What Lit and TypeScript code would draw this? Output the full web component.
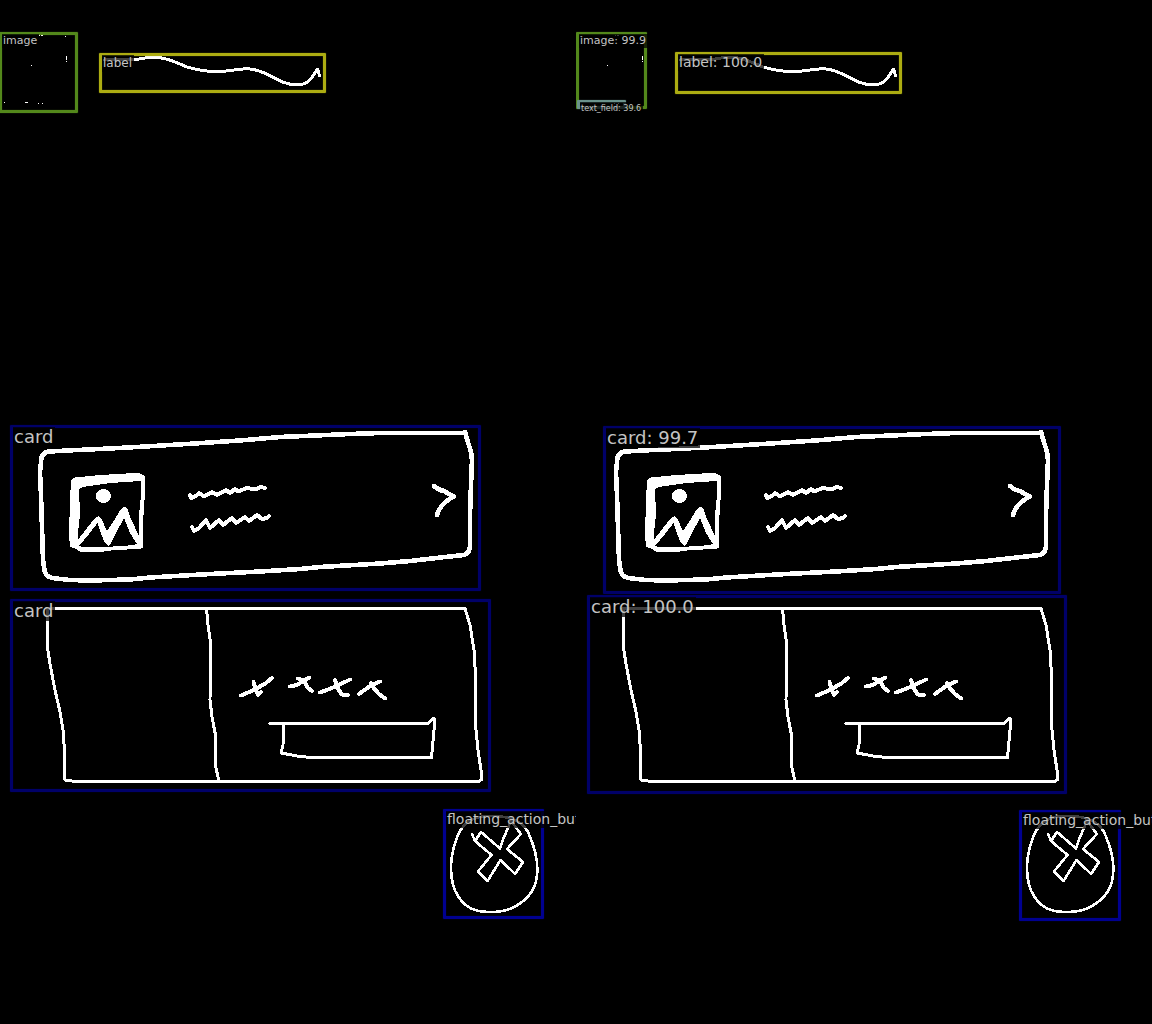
import { LitElement, css, html, svg } from "lit";
import { customElement, property } from "lit/decorators.js";
import { classMap } from "lit/directives/class-map.js";

const CANVAS_WIDTH = 576;
const CANVAS_HEIGHT = 1024;

type Kind = "image" | "label" | "card" | "fab" | "field";
type TextSize = "tiny" | "small" | "compact" | "medium" | "large";

interface Detection {
  kind: Kind;
  size: TextSize;
  text: string;
  left: number;
  top: number;
  right: number;
  bottom: number;
}

const groundTruth: Detection[] = [
  { kind: "image", size: "small", text: "image", left: -1, top: 32, right: 78, bottom: 113 },
  { kind: "label", size: "compact", text: "label", left: 99, top: 53, right: 326, bottom: 93 },
  { kind: "card", size: "large", text: "card", left: 10, top: 425, right: 481, bottom: 591 },
  { kind: "card", size: "large", text: "card", left: 10, top: 599, right: 491, bottom: 792 },
  { kind: "fab", size: "medium", text: "floating_action_button", left: 443, top: 809, right: 544, bottom: 919 },
];

const predictions: Detection[] = [
  { kind: "image", size: "small", text: "image: 99.9", left: 0, top: 32, right: 71, bottom: 109 },
  { kind: "field", size: "tiny", text: "text_field: 39.6", left: 1, top: 100, right: 50, bottom: 109 },
  { kind: "label", size: "medium", text: "label: 100.0", left: 99, top: 52, right: 326, bottom: 94 },
  { kind: "card", size: "large", text: "card: 99.7", left: 27, top: 426, right: 485, bottom: 594 },
  { kind: "card", size: "large", text: "card: 100.0", left: 11, top: 595, right: 491, bottom: 794 },
  { kind: "fab", size: "medium", text: "floating_action_button", left: 443, top: 810, right: 545, bottom: 921 },
];

const specks = svg`
  <path class="solid" d="M31 65h1v1h-1zM66 56h1v4h-1zM66 61h1v1h-1zM4 102h1v1h-1zM25 102h3v1h-3zM38 103h1v1h-1zM42 103h1v1h-1zM39 35h1v1h-1zM41 35h2v1h-2zM65 36h1v1h-1zM4 36h1v1h-1z"/>`;

const wave = svg`
  <path class="line" d="M104 60Q118 59 134 60Q145 57 157 57.500C169 58 177 63 187 67C197 70 206 72 220 71.500C232 71 240 68 250 69C264 70 276 80 284 82.500C292 85.500 302 86 308 81.500C314 77 315 71 317.500 69.500Q319 72 319.500 76"/>`;

const listCard = svg`
  <path class="line heavy" d="M41 462Q41 452 50 451.500L67 450.500 110 448.500 145 446.500 195 443.500 240 440.500 280 437 350 434 380 433H464L465 432 467 439 471 452 472 460 471 485 470 515V545Q470 553 464 555L445 557 410 561 380 563.500 320 567 300 569 260 571.500 210 574 150 577.500 130 579.500 90 580.500 70 580 52 578Q45 576 44.500 570L43 560 42 527 41 495 40 472Z"/>
  <path class="solid" d="M71 481Q72 478 75 477.500L100 475 135 473Q143 473 145 477L144.500 500 142.500 530 143 548 139 549 115 550 100 552 80 551.500 74 548 70 547 69 535 70 500Z"/>
  <path class="hole" d="M79 489Q80 487 90 486L110 483 141 481V495L139 515 138.500 544 125 546 100 547H82L78 545 78 532 80 515Z"/>
  <path class="solid" d="M77 541L87 528 96 517 99 516 102 520 107 531 115 519 121 509 124 507 127 508 131 519 139 536V546L135 541 130 533 124 518 116 533 111 543 108 546 105 543 101 534 97.500 523 89 534 79 546Z"/>
  <ellipse class="solid" cx="103.500" cy="496" rx="7.500" ry="7"/>
  <path class="line glyph" d="M190 495L191 498 196 496 199 493 204 496.500 212 492 217 495 226 490 230 493 235 489 238 491.500 247 488 255 489.500 261 487 265 488"/>
  <path class="line glyph" d="M192 527L194 531 199 528 206 520 210 528 219 520 223 525 232 518 236 523 245 517 249 521 257 515 262 519 267 518 269 516"/>
  <path class="line heavy" d="M434 486Q438 490 444 491L453.500 496.500Q440 504 437 515"/>`;

const mediaCard = svg`
  <path class="line" d="M47 608.500H465L470 625 474 650 475.500 675V725L478 750 481 770 482 779 479 781.500H75L65 780 64.500 750 63 730 60 712 55 690 50 664 47 644Z"/>
  <path class="line" d="M206.500 609L208 625 210.500 642 210 700 212 717 215.500 735 216 768 219 781"/>
  <path class="line glyph" d="M241 695.500L254 690 266 683 272 678M253.500 682L256 690 258 695 261 692"/>
  <path class="line glyph" d="M290 686.500L297 685 304 680.500 309 677.500M298 678.500L304 681 308 688 312 691"/>
  <path class="line glyph" d="M320 692.500L332 688 345 682 350 679.500M335 680L337 687 341 693.500 344 695.500 348 695"/>
  <path class="line glyph" d="M359 694L370 686 380 681.500M371 683L373 687 379 694 385 698.500"/>
  <path class="line" d="M270 723.500H428L434 718V730L431.500 757.500H312L300 756.500 281 753 283 745 283.500 724"/>`;

const roundButton = svg`
  <path class="line fine" d="M468 822C456 830 451 855 451 868C451 892 462 907 478 911C492 913 506 912 516 906C530 898 536 888 537 875C539 858 533 843 528 832C520 818 505 816 490 816Q476 816 468 822Z"/>
  <path class="line fine" d="M472 834L475 841 481 832 500 848.500 504 837 511 821 521 834 507 849 523 862 515 874 500.500 860 487.500 881 478 871.500 491.500 855 475 841"/>`;

@customElement("annotated-sketch")
export class AnnotatedSketch extends LitElement {
  @property({ attribute: false }) detections: Detection[] = [];
  @property() caption = "";

  static styles = css`
    :host {
      display: block;
      min-width: 0;
    }
    .canvas {
      position: relative;
      margin: 0;
      aspect-ratio: 576 / 1024;
      overflow: hidden;
      background: #000;
    }
    .sketch {
      display: block;
      width: 100%;
      height: 100%;
    }
    .line {
      fill: none;
      stroke: #fff;
      stroke-width: 3;
      stroke-linecap: round;
      stroke-linejoin: round;
    }
    .heavy {
      stroke-width: 4.6;
    }
    .glyph {
      stroke-width: 4;
    }
    .fine {
      stroke-width: 2.6;
    }
    .solid {
      fill: #fff;
    }
    .hole {
      fill: #000;
    }
    .box {
      position: absolute;
      box-sizing: border-box;
      border: 3px solid currentcolor;
      border-radius: 1px;
      box-shadow: 0 0 1px currentcolor, inset 0 0 1px currentcolor;
    }
    .image {
      color: #53881b;
    }
    .label {
      color: #acac12;
    }
    .card {
      color: #000068;
    }
    .fab {
      color: #000090;
    }
    .field {
      color: #6a938c;
    }
    .tag {
      position: absolute;
      top: -1px;
      left: 0;
      padding: 0 2px 1px 1px;
      background: rgb(0 0 0 / 75%);
      color: #c4c4c4;
      font-family: "DejaVu Sans", sans-serif;
      white-space: nowrap;
    }
    .tiny {
      font-size: 8px;
      line-height: 14px;
    }
    .small {
      font-size: 11px;
      line-height: 13px;
    }
    .compact {
      font-size: 12px;
      line-height: 16px;
    }
    .medium {
      font-size: 14px;
      line-height: 16px;
    }
    .large {
      font-size: 18px;
      line-height: 19px;
    }
  `;

  private renderBox(item: Detection) {
    const x = (value: number) => `${(value / CANVAS_WIDTH) * 100}%`;
    const y = (value: number) => `${(value / CANVAS_HEIGHT) * 100}%`;
    const place = [
      `left:${x(item.left)}`,
      `top:${y(item.top)}`,
      `width:${x(item.right - item.left)}`,
      `height:${y(item.bottom - item.top)}`,
    ].join(";");
    return html`
      <div class=${classMap({ box: true, [item.kind]: true })} style=${place}>
        <span class=${classMap({ tag: true, [item.size]: true })}>${item.text}</span>
      </div>
    `;
  }

  render() {
    return html`
      <figure class="canvas" aria-label=${this.caption}>
        <svg
          class="sketch"
          viewBox="0 0 576 1024"
          shape-rendering="crispEdges"
          aria-hidden="true"
        >
          ${specks}${wave}${listCard}${mediaCard}${roundButton}
        </svg>
        ${this.detections.map((item) => this.renderBox(item))}
      </figure>
    `;
  }
}

@customElement("app-root")
export class AppRoot extends LitElement {
  static styles = css`
    :host {
      display: block;
      background: #000;
    }
    .comparison {
      display: grid;
      grid-template-columns: repeat(2, minmax(0, 1fr));
    }
  `;

  render() {
    return html`
      <main class="comparison">
        <annotated-sketch caption="Ground truth" .detections=${groundTruth}></annotated-sketch>
        <annotated-sketch caption="Predictions" .detections=${predictions}></annotated-sketch>
      </main>
    `;
  }
}
